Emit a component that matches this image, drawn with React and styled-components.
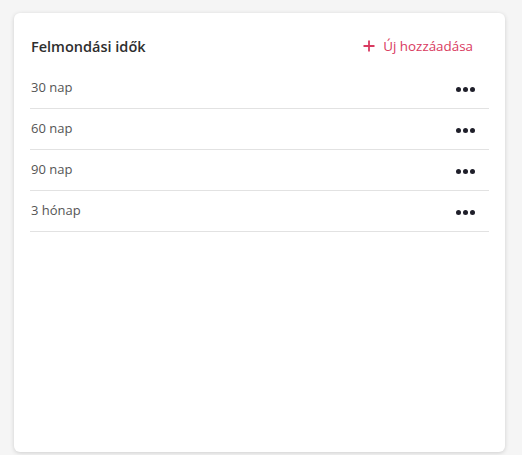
import styled, { createGlobalStyle } from "styled-components";

const GlobalStyle = createGlobalStyle`
  body {
    margin: 0;
    background: #f5f5f5;
    font-family: "Open Sans", "Liberation Sans", sans-serif;
  }
`;

const items = ["30 nap", "60 nap", "90 nap", "3 hónap"];

const App = () => {
  return (
    <Page>
      <GlobalStyle />
      <Card>
        <Header>
          <Title>Felmondási idők</Title>
          <AddButton type="button">
            <svg width="12" height="12" viewBox="0 0 12 12">
              <path
                d="M6 0.5v11M0.5 6h11"
                stroke="currentColor"
                strokeWidth="1.8"
                fill="none"
              />
            </svg>
            Új hozzáadása
          </AddButton>
        </Header>
        <List>
          {items.map((item) => (
            <Row key={item}>
              <Label>{item}</Label>
              <MoreButton type="button" aria-label="Műveletek">
                <Dot />
                <Dot />
                <Dot />
              </MoreButton>
            </Row>
          ))}
        </List>
      </Card>
    </Page>
  );
};

const Page = styled.div`
  padding: 13px 17px 3px 14px;
`;

const Card = styled.div`
  height: 439px;
  box-sizing: border-box;
  background: #fff;
  border-radius: 6px;
  box-shadow: 0 1px 4px rgba(0, 0, 0, 0.16);
  padding: 24px 16px;
`;

const Header = styled.div`
  display: flex;
  align-items: center;
  justify-content: space-between;
  height: 18px;
  margin-bottom: 13px;
  padding: 0 16px 0 1px;
`;

const Title = styled.h2`
  margin: 0;
  font-size: 14.5px;
  font-weight: 600;
  color: #2e2e2e;
`;

const AddButton = styled.button`
  display: flex;
  align-items: center;
  gap: 8px;
  border: none;
  background: none;
  padding: 0;
  font-family: inherit;
  font-size: 13.4px;
  color: #d93a60;
  cursor: pointer;
`;

const List = styled.div`
  display: flex;
  flex-direction: column;
`;

const Row = styled.div`
  display: flex;
  align-items: center;
  justify-content: space-between;
  height: 40px;
  border-bottom: 1px solid #e2e2e2;
  padding: 0 14px 0 1px;
`;

const Label = styled.span`
  font-size: 13px;
  color: #555;
  margin-top: -2px;
`;

const MoreButton = styled.button`
  display: flex;
  gap: 2px;
  border: none;
  background: none;
  padding: 0;
  margin-top: 3px;
  cursor: pointer;
`;

const Dot = styled.span`
  width: 5px;
  height: 5px;
  border-radius: 50%;
  background: #1f1f2a;
`;

export default App;
